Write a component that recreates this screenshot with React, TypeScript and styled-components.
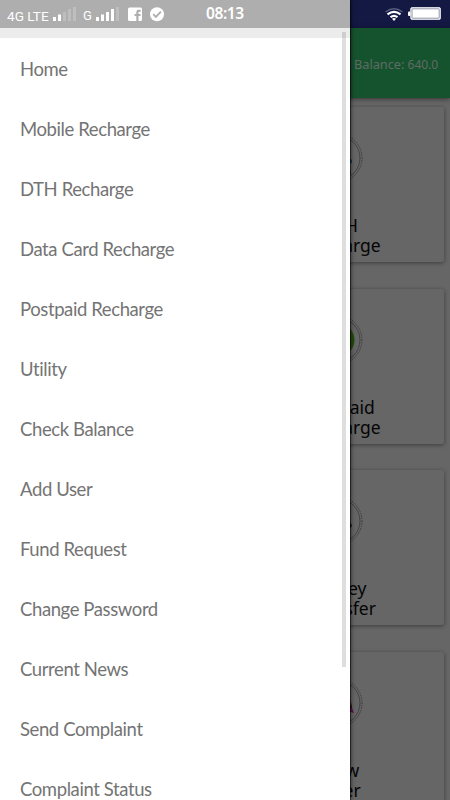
import React from 'react';
import styled, { createGlobalStyle } from 'styled-components';

const GlobalStyle = createGlobalStyle`
  * { box-sizing: border-box; }
  html, body { margin: 0; padding: 0; overflow: hidden; }
`;

const Screen = styled.div`
  position: relative;
  width: 450px;
  height: 800px;
  overflow: hidden;
  background: #666;
  font-family: 'Noto Sans', sans-serif;
`;

const Page = styled.div`
  display: flex;
  flex-direction: column;
  height: 800px;
  overflow: hidden;
`;

const PageStatus = styled.div`
  flex: none;
  display: flex;
  justify-content: flex-end;
  height: 28px;
  padding: 7px 9px 0 0;
  background: #141944;
`;

const AppBar = styled.header`
  flex: none;
  display: flex;
  justify-content: flex-end;
  align-items: center;
  height: 70px;
  padding: 2px 12px 0 0;
  background: #14532e;
  box-shadow: 0 1px 5px rgba(0, 0, 0, 0.5);
  color: #606b64;
  font-size: 12.8px;
  white-space: nowrap;
`;

const Balance = styled.span`
  letter-spacing: -0.05px;
`;

const Amount = styled.span`
  font-size: 12px;
`;

const Cards = styled.main`
  display: flex;
  flex-direction: column;
  gap: 26.7px;
  padding: 9px 6px 0 232px;
`;

const Card = styled.section`
  flex: none;
  display: flex;
  flex-direction: column;
  align-items: center;
  height: 155px;
  padding-top: 26px;
  border-radius: 2px;
  background: #666;
  box-shadow: 0 1px 4px rgba(0, 0, 0, 0.42);
`;

const CardTitle = styled.div`
  display: flex;
  flex-direction: column;
  align-items: center;
  margin-top: 32px;
  color: #050505;
  font-size: 17.5px;
  line-height: 20px;
`;

const TitleLine = styled.span<{ $indent: number }>`
  padding-left: ${(p) => p.$indent}px;
`;

const Drawer = styled.aside`
  position: absolute;
  top: 0;
  left: 0;
  display: flex;
  flex-direction: column;
  width: 350px;
  height: 800px;
  background: #fff;
  box-shadow: 0 0 5px rgba(0, 0, 0, 0.85), 1px 0 0 rgba(0, 0, 0, 0.45);
`;

const DrawerStatus = styled.div`
  flex: none;
  display: flex;
  height: 28px;
  padding-left: 7px;
  background: #aeaeae;
  color: #fff;
`;

const Carrier = styled.span<{ $width: number; $size: number }>`
  flex: none;
  width: ${(p) => p.$width}px;
  padding-top: 8px;
  font: ${(p) => p.$size}px/16px Roboto, sans-serif;
  white-space: nowrap;
`;

const StatusIcon = styled.svg<{ $gap: number }>`
  flex: none;
  margin-right: ${(p) => p.$gap}px;
`;

const Clock = styled.time`
  font-size: 15.5px;
  font-weight: 600;
  line-height: 27px;
  letter-spacing: -0.4px;
`;

const DrawerTop = styled.div`
  flex: none;
  height: 10px;
  background: #ececec;
`;

const MenuList = styled.ul`
  flex: none;
  margin: 0;
  padding: 1px 0 0;
  list-style: none;
`;

const MenuItem = styled.li`
  display: flex;
  align-items: center;
  height: 60px;
  padding-left: 20px;
  color: #747474;
  font: 18.5px/24px Lato, sans-serif;
  letter-spacing: -0.4px;
`;

const ScrollThumb = styled.div`
  position: absolute;
  top: 32px;
  right: 4px;
  width: 4px;
  height: 635px;
  background: rgba(0, 0, 0, 0.13);
`;

const menu = [
  'Home', 'Mobile Recharge', 'DTH Recharge', 'Data Card Recharge', 'Postpaid Recharge',
  'Utility', 'Check Balance', 'Add User', 'Fund Request', 'Change Password',
  'Current News', 'Send Complaint', 'Complaint Status',
];

const cards = [
  { top: 'DTH', bottom: 'Recharge', art: 'dish', indent: [5, 8] },
  { top: 'Postpaid', bottom: 'Recharge', art: 'leaf', indent: [2, 8] },
  { top: 'Money', bottom: 'Transfer', art: 'coin', indent: [1, 8] },
  { top: 'View', bottom: 'User', art: 'people', indent: [4, 7] },
];

const Signal = ({ strong, gap }: { strong: number; gap: number }) => (
  <StatusIcon $gap={gap} width="23" height="28" viewBox="0 0 23 28">
    {[4, 6.5, 9, 12, 14].map((h, i) => (
      <rect key={h} x={i * 5} y={21 - h} width="3" height={h} fill="#fff" opacity={i < strong ? 1 : 0.2} />
    ))}
  </StatusIcon>
);

const CardArt = ({ kind }: { kind: string }) => (
  <svg width="50" height="50" viewBox="0 0 50 50" fill="none">
    <circle cx="25" cy="25" r="24" stroke="#383838" strokeWidth="1" strokeDasharray="1.3 1.1" />
    <circle cx="25" cy="25" r="22" stroke="#434343" strokeWidth="1" />
    {kind === 'dish' && (
      <>
        <path d="M34 7l3 3-2 4M33 36l4 1 1 4h-5z" fill="#222" />
        <path d="M35 24l4 3v3l-4 1z" fill="#1d3d60" />
      </>
    )}
    {kind === 'leaf' && <circle cx="25" cy="25" r="16.5" fill="#244d0c" />}
    {kind === 'coin' && <path d="M30 24c4-1 8 2 9 6l-3 4h-8z" fill="#101a26" />}
    {kind === 'people' && (
      <>
        <path d="M34 20q4 0 5 10l-3 5h-6z" fill="#161616" />
        <path d="M35 29l4 1 2 5-7-2z" fill="#65104f" />
        <path d="M37 22l1 5" stroke="#6d2a20" />
      </>
    )}
  </svg>
);

export default function App() {
  return (
    <Screen>
      <GlobalStyle />
      <Page>
        <PageStatus>
          <StatusIcon $gap={4} width="20" height="15" viewBox="0 0 20 15" fill="none">
            <path d="M1.5 5Q10-1.5 18.5 5" stroke="#555b7b" strokeWidth="1.5" />
            <path d="M3.5 7.3Q10 2.3 16.5 7.3M6.5 10.2Q10 7.5 13.5 10.2" stroke="#fff" strokeWidth="2.1" />
            <path d="M8 11.8q2-1.5 4 0L10 14z" fill="#fff" />
          </StatusIcon>
          <StatusIcon $gap={0} width="33" height="14" viewBox="0 0 33 14">
            <rect x="0" y="4.5" width="3" height="4.5" rx="1" fill="#fff" />
            <rect x="2.7" y="0.5" width="29.8" height="12" rx="1.5" fill="#fff" stroke="#d5d6df" />
            <rect x="4" y="1.8" width="27.2" height="9.4" rx="0.5" fill="#fff" stroke="#85889e" strokeWidth="0.9" />
          </StatusIcon>
        </PageStatus>
        <AppBar>
          <Balance>Balance: <Amount>640.0</Amount></Balance>
        </AppBar>
        <Cards>
          {cards.map((c) => (
            <Card key={c.top}>
              <CardArt kind={c.art} />
              <CardTitle>
                <TitleLine $indent={c.indent[0]}>{c.top}</TitleLine>
                <TitleLine $indent={c.indent[1]}>{c.bottom}</TitleLine>
              </CardTitle>
            </Card>
          ))}
        </Cards>
      </Page>
      <Drawer>
        <DrawerStatus>
          <Carrier $width={46} $size={13.6}>4G LTE</Carrier>
          <Signal strong={2} gap={7} />
          <Carrier $width={13} $size={13}>G</Carrier>
          <Signal strong={4} gap={9} />
          <StatusIcon $gap={8} width="14" height="28" viewBox="0 0 14 28">
            <path fillRule="evenodd" fill="#fff" d="M1.5 7.5h11Q14 7.5 14 9v10.500q0 1.500-1.500 1.500h-2v-5h2v-2h-2v-1.500q0-.8 1-.8h1.200v-2h-2q-2.400 0-2.400 2.400V14H6.500v2h1.800v5H1.500Q0 21 0 19.500V9q0-1.500 1.500-1.500z" />
          </StatusIcon>
          <StatusIcon $gap={42} width="14" height="28" viewBox="0 0 14 28">
            <circle cx="7" cy="14.200" r="7" fill="#fff" />
            <path d="M3.200 14.200l2.700 2.700 5-5.300" fill="none" stroke="#aeaeae" strokeWidth="1.800" />
          </StatusIcon>
          <Clock>08:13</Clock>
        </DrawerStatus>
        <DrawerTop />
        <MenuList>
          {menu.map((item) => <MenuItem key={item}>{item}</MenuItem>)}
        </MenuList>
        <ScrollThumb />
      </Drawer>
    </Screen>
  );
}
